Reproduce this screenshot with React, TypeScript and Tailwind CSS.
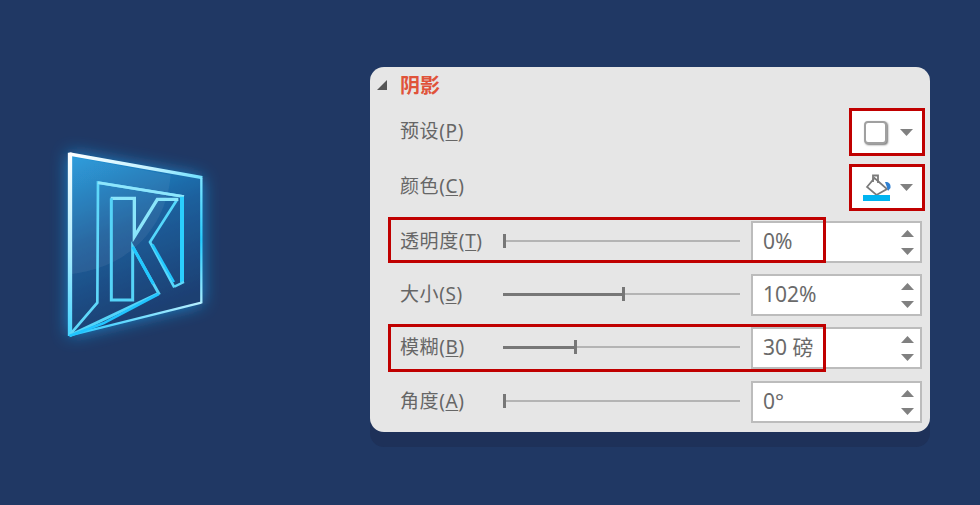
import React from "react";

const SliderRow = ({
  label,
  hotkey,
  value,
  fill,
  thumb,
  className,
  highlight,
}: {
  label: string;
  hotkey: string;
  value: string;
  fill: string;
  thumb: string;
  className: string;
  highlight?: string;
}) => (
  <div className={`relative flex h-[42px] items-center pl-[30px] pr-[8px] ${className}`}>
    <Label text={label} hotkey={hotkey} />
    <div className="ml-auto flex items-center">
      <div className="relative flex h-[14px] w-[237px] -translate-y-[1px] items-center">
        <div className="h-[2px] w-full bg-[#b4b4b4]" />
        <div className={`absolute left-0 top-[5.5px] h-[3px] bg-[#777777] ${fill}`} />
        <div className={`absolute top-0 h-[14px] w-[3px] bg-[#777777] ${thumb}`} />
      </div>
      <div className="ml-[11px] flex h-[42px] w-[171px] items-center justify-between border-2 border-[#bcbcbc] bg-white pl-[10px] pr-[6px]">
        <span className="-translate-y-[1px] text-[21px] leading-none text-[#6a6a6a]">{value}</span>
        <div className="flex flex-col gap-[11px]">
          <Tri up />
          <Tri />
        </div>
      </div>
    </div>
    {highlight && <div className={`pointer-events-none absolute left-[18px] w-[438px] border-[3px] border-[#c00000] ${highlight}`} />}
  </div>
);

const Label = ({ text, hotkey }: { text: string; hotkey: string }) => (
  <span className="-translate-y-[1px] text-[19px] leading-none tracking-[0.6px] text-[#666666]">
    {text}(<span className="underline underline-offset-2">{hotkey}</span>)
  </span>
);

const Tri = ({ up }: { up?: boolean }) => (
  <svg width="13" height="7" viewBox="0 0 13 7" className="block">
    <path d={up ? "M6.5 0 13 7H0Z" : "M0 0H13L6.5 7Z"} fill="#808080" />
  </svg>
);

const Logo = () => (
  <svg width="190" height="230" viewBox="0 0 570 690" className="block overflow-visible">
    <defs>
      <linearGradient id="face" gradientUnits="userSpaceOnUse" x1="100" y1="70" x2="300" y2="560">
        <stop offset="0" stopColor="#2199dc" />
        <stop offset="0.5" stopColor="#1c5f9c" />
        <stop offset="1" stopColor="#1e3f72" />
      </linearGradient>
      <linearGradient id="top" gradientUnits="userSpaceOnUse" x1="85" y1="68" x2="487" y2="143">
        <stop offset="0" stopColor="#ffffff" />
        <stop offset="0.6" stopColor="#c4f2ff" />
        <stop offset="1" stopColor="#6fe0ff" />
      </linearGradient>
      <linearGradient id="left" gradientUnits="userSpaceOnUse" x1="88" y1="68" x2="88" y2="618">
        <stop offset="0" stopColor="#ffffff" />
        <stop offset="0.55" stopColor="#a8ecff" />
        <stop offset="1" stopColor="#45d4ff" />
      </linearGradient>
      <linearGradient id="right" gradientUnits="userSpaceOnUse" x1="484" y1="143" x2="484" y2="520">
        <stop offset="0" stopColor="#7fe4ff" />
        <stop offset="0.5" stopColor="#25ccff" />
        <stop offset="1" stopColor="#a8edff" />
      </linearGradient>
      <linearGradient id="bottom" gradientUnits="userSpaceOnUse" x1="90" y1="616" x2="484" y2="518">
        <stop offset="0" stopColor="#25c8ff" />
        <stop offset="1" stopColor="#b8f0ff" />
      </linearGradient>
      <filter id="soft" x="-40%" y="-40%" width="180%" height="180%">
        <feGaussianBlur stdDeviation="26" />
      </filter>
      <filter id="tiny" x="-10%" y="-10%" width="120%" height="120%">
        <feGaussianBlur stdDeviation="1" />
      </filter>
    </defs>
    <path d="M85 68 487 143V520L85 618Z" fill="#1c9ce8" opacity="0.8" filter="url(#soft)" />
    <g filter="url(#tiny)" strokeLinejoin="miter">
      <path d="M85 68 487 143V520L85 618Z" fill="url(#face)" />
      <path d="M95 80 392 136C380 280 280 410 95 432Z" fill="#ffffff" opacity="0.06" />
      <path d="M88 72 487 143" fill="none" stroke="url(#top)" strokeWidth="10" />
      <path d="M90 68V618" fill="none" stroke="url(#left)" strokeWidth="13" />
      <path d="M484 143V520" fill="none" stroke="url(#right)" strokeWidth="7" />
      <path d="M484 518 90 616" fill="none" stroke="url(#bottom)" strokeWidth="7" />
      <path d="M88 616 172 518 174 158 432 200" fill="none" stroke="#5fd8fa" strokeWidth="8" />
      <path d="M174 158 432 200" fill="none" stroke="#8fe6fc" strokeWidth="8" />
      <path d="M426 200V458" fill="none" stroke="#2ccfff" strokeWidth="12" />
      <path d="M432 456 403 470" fill="none" stroke="#5fd8fa" strokeWidth="7" />
      <path d="M403 472 330 336 412 208" fill="none" stroke="#55d8fc" strokeWidth="8" />
      <path d="M212 205H283V320L352 208H415" fill="none" stroke="#8be6fb" strokeWidth="10" />
      <path d="M214 205V510H278V350L356 490 90 616" fill="none" stroke="#55d4f8" strokeWidth="9" />
      <path d="M88 618 190 580 356 492" fill="none" stroke="#20c4ff" strokeWidth="8" />
      <path d="M278 350 340 462" fill="none" stroke="#22c8ff" strokeWidth="9" />
      <path d="M338 344 402 456" fill="none" stroke="#22c8ff" strokeWidth="7" />
    </g>
  </svg>
);

const Bucket = () => (
  <svg width="29" height="28" viewBox="0 0 29 28" className="block">
    <path d="M4 13 11.5 4 24 15 13.5 21Z" fill="#ffffff" stroke="#7a7a7a" strokeWidth="1.8" />
    <path d="M10 8V1.5H15V9" fill="none" stroke="#7a7a7a" strokeWidth="1.8" />
    <path d="M22 8C26 7.5 28 10 27.5 14L25 17 23.5 12Z" fill="#2f7fd0" />
    <rect x="0" y="21" width="27" height="6" fill="#00b4f0" />
  </svg>
);

export default function App() {
  return (
    <div className="flex h-[505px] w-[980px] overflow-hidden bg-[#203864] font-['Noto_Sans','Noto_Sans_CJK_SC',sans-serif]">
      <div className="ml-[40px] mt-[130px] w-[330px]">
        <Logo />
      </div>
      <div className="mt-[67px] h-[365px] w-[560px] rounded-[14px] bg-[#e6e6e6] shadow-[0_15px_0_#1e3159]">
        <div className="flex h-[36px] items-center pl-[7px]">
          <svg width="10" height="10" viewBox="0 0 10 10" className="block">
            <path d="M10 0V10H0Z" fill="#555555" />
          </svg>
          <span className="ml-[13px] translate-y-[1px] text-[20px] font-bold leading-none text-[#e0533a]">阴影</span>
        </div>
        <div className="mt-[5px] flex h-[48px] items-center pl-[30px] pr-[5px]">
          <Label text="预设" hotkey="P" />
          <div className="ml-auto flex h-[48px] w-[76px] items-center border-[3px] border-[#c00000] bg-white pl-[12px]">
            <div className="h-[23px] w-[23px] rounded-[4px] border-2 border-[#a0a0a0] bg-white shadow-[1px_1px_2px_#777777]" />
            <div className="ml-[13px]">
              <Tri />
            </div>
          </div>
        </div>
        <div className="mt-[8px] flex h-[47px] items-center pl-[30px] pr-[5px]">
          <Label text="颜色" hotkey="C" />
          <div className="ml-auto flex h-[47px] w-[76px] items-center border-[3px] border-[#c00000] bg-white pl-[11px]">
            <Bucket />
            <div className="ml-[8px]">
              <Tri />
            </div>
          </div>
        </div>
        <SliderRow label="透明度" hotkey="T" value="0%" fill="w-[3px]" thumb="left-0" className="mt-[10px]" highlight="top-[-4px] h-[46px]" />
        <SliderRow label="大小" hotkey="S" value="102%" fill="w-[120px]" thumb="left-[119px]" className="mt-[11px]" />
        <SliderRow label="模糊" hotkey="B" value="30 磅" fill="w-[72px]" thumb="left-[71px]" className="mt-[11px]" highlight="top-[-3px] h-[48px]" />
        <SliderRow label="角度" hotkey="A" value="0°" fill="w-[3px]" thumb="left-0" className="mt-[12px]" />
      </div>
    </div>
  );
}
